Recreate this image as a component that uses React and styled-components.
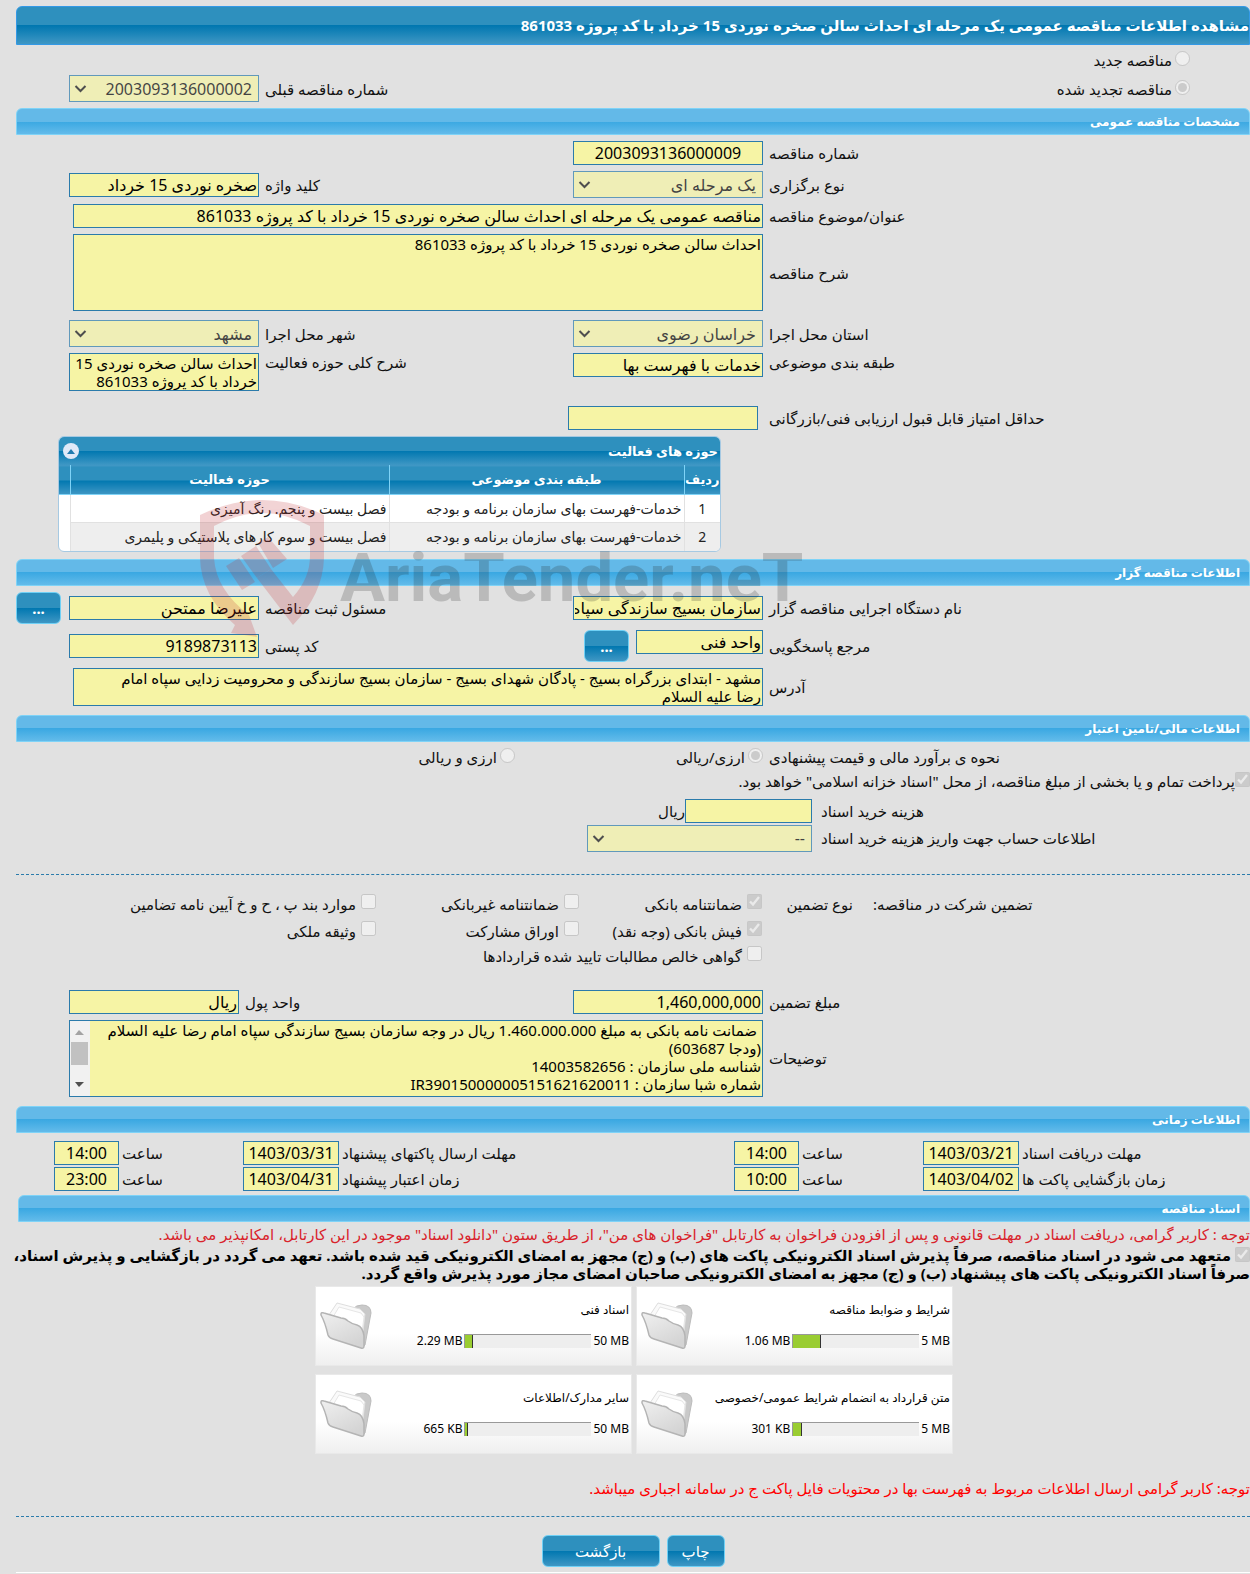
import styled, { createGlobalStyle, css } from "styled-components";

const GlobalStyle = createGlobalStyle`
	* {
		box-sizing: border-box;
	}
	body {
		margin: 0;
		background: #e1e1e1;
		color: #111;
		font-family: "Noto Sans", "DejaVu Sans", sans-serif;
		font-size: 15px;
		line-height: 18px;
	}
	input, select, textarea, button {
		font-family: inherit;
	}
`;
const darkBar = css`
	background: linear-gradient(#2e90be 0, #2e90be 50%, #0077b0 50%, #3f97c4 100%);
	color: #fff;
`;
const Page = styled.div`
	padding: 6px 0 0 16px;
	position: relative;
	overflow: hidden;
`;
const Title = styled.h1`
	${darkBar}
	border: 1px solid #3399e6;
	border-radius: 6px 6px 0 0;
	font-size: 15px;
	line-height: 37px;
	margin: 0;
	white-space: nowrap;
`;
const SectionTitle = styled.h2`
	background: linear-gradient(#63b9e8 0, #63b9e8 50%, #3aa8e2 50%, #63bbea 100%);
	border: 1px solid #7fd3f7;
	border-radius: 6px 6px 0 0;
	color: #fff;
	font-size: 12px;
	line-height: 25px;
	margin: 0;
	padding: 0 9px;
`;
const Body = styled.div`
	display: flex;
	flex-direction: column;
	gap: 6px;
	padding: 6px 0;
`;
const Row = styled.div`
	display: grid;
	grid-template-columns: 1fr 190px ${(p) => (p.$narrow ? "322px 170px" : "302px 190px")} 47px;
	column-gap: 6px;
	align-items: ${(p) => p.$align || "center"};
	margin-bottom: ${(p) => p.$after || 0}px;
`;
const Label = styled.label`
	text-align: end;
	white-space: nowrap;
`;
const field = css`
	background: #f6f4a5;
	border: 1px solid #2b7bab;
	border-radius: 0;
	color: #000;
	display: block;
	margin: 0;
	outline: none;
	width: 100%;
`;
const Input = styled.input`
	${field}
	font-size: 16px;
	height: 24px;
	padding: 1px;
	text-align: ${(p) => (p.$center ? "center" : "start")};
	width: ${(p) => p.$width || "100%"};
`;
const TextArea = styled.textarea`
	${field}
	font-size: 15px;
	height: ${(p) => p.$height}px;
	line-height: 18px;
	overflow: hidden;
	padding: ${(p) => (p.$scroll ? "0 1px 0 20px" : "0 1px")};
	resize: none;
`;
const Wide = styled.div`
	grid-column: 2 / 5;
	padding-inline-end: ${(p) => (p.$full ? 0 : 4)}px;
	position: relative;
`;
const ScrollBar = styled.svg`
	position: absolute;
	left: 1px;
	top: 1px;
`;
const Indent = styled.div`
	padding-inline-start: 5px;
`;
const SelectBox = styled.div`
	position: relative;
	width: ${(p) => p.$width || "100%"};
	opacity: 0.7;
	svg {
		position: absolute;
		left: 5px;
		top: 10px;
	}
`;
const SelectField = styled.select`
	${field}
	appearance: none;
	font-size: 16px;
	height: 27px;
	opacity: 1;
	padding: 0 6px;
`;
const Option = styled.label`
	display: flex;
	align-items: flex-start;
	gap: ${(p) => p.$gap ?? 3}px;
	height: 18px;
	white-space: nowrap;
	input {
		flex: none;
		width: 15px;
		height: 15px;
		margin: 0;
	}
`;
const LeadOption = styled(Option)`
	grid-column: 1 / 3;
	padding-right: 60px;
`;
const Options = styled.div`
	display: grid;
	grid-column: 2 / 5;
	grid-template-columns: 248px 1fr;
`;
const Button = styled.button`
	${darkBar}
	border: 1px solid #6fd0f5;
	border-radius: 6px;
	cursor: pointer;
	font-size: 15px;
	height: 32px;
	padding: 0;
	width: ${(p) => p.$width}px;
`;
const MoreButton = styled(Button)`
	font-weight: bold;
	justify-self: end;
`;
const Inline = styled.div`
	display: flex;
	align-items: flex-start;
	gap: 7px;
`;
const Purchase = styled.div`
	display: grid;
	grid-template-columns: 1fr 796px;
	align-items: center;
	gap: 2px 9px;
	margin-top: 3px;
`;
const Unit = styled.span`
	align-self: center;
`;
const Amount = styled.div`
	display: flex;
`;
const Rule = styled.hr`
	border: 0;
	border-top: 1px dashed #2b7bab;
	margin: ${(p) => p.$space};
	width: 100%;
`;
const Guarantees = styled.div`
	display: grid;
	grid-template-columns: 1fr 111px 183px 203px 360px;
	gap: 7px 0;
	margin-bottom: 20px;
	line-height: 20px;
`;
const GuaranteeTitle = styled.span`
	text-align: end;
`;
const KindTitle = styled.span`
	padding-inline-start: 20px;
	white-space: nowrap;
`;
const GuaranteeOption = styled(Option)`
	grid-column: ${(p) => p.$column};
`;
const GridPanel = styled.div`
	border: 1px solid #a6c9e2;
	border-radius: 6px;
	background: #fff;
	margin-inline-start: auto;
	margin-inline-end: 42px;
	margin-bottom: 1px;
	overflow: hidden;
	width: 663px;
`;
const GridCaption = styled.div`
	${darkBar}
	display: flex;
	align-items: center;
	justify-content: space-between;
	font-size: 13px;
	font-weight: bold;
	height: 28px;
	padding: 0 2px 0 4px;
`;
const Collapse = styled.button`
	background: #dfe9f8;
	border: 0;
	border-radius: 50%;
	display: flex;
	align-items: center;
	justify-content: center;
	height: 16px;
	padding: 0;
	width: 16px;
`;
const Table = styled.table`
	border-collapse: collapse;
	table-layout: fixed;
	width: 100%;
	th {
		${darkBar}
		border-bottom: 1px solid #7fd3f7;
		border-left: 1px solid #7fd3f7;
		border-top: 1px solid #3f97c4;
		font-size: 13px;
		height: 29px;
		padding: 0 0 3px;
	}
	td {
		border-left: 1px solid #e1e1e1;
		color: #222;
		font-size: 14px;
		height: 28px;
		padding: 0 2px;
		text-align: start;
		white-space: nowrap;
	}
	tr:nth-child(even) td:not(:last-child) {
		background: #eee;
		border-top: 1px solid #e1e1e1;
	}
	th:last-child,
	td:last-child {
		border-left: 0;
	}
	td:first-child {
		text-align: center;
	}
`;
const Col = styled.col`
	width: ${(p) => p.$width}px;
`;
const Times = styled.div`
	display: grid;
	grid-template-columns: 1fr 96px 118px 65px 389px 96px 118px 65px 35px;
	align-items: center;
	column-gap: 3px;
	row-gap: 2px;
	padding: 8px 0 4px;
`;
const TimeLabel = styled(Label)`
	grid-column: ${(p) => p.$column};
`;
const Docs = styled.section`
	margin-left: 2px;
`;
const Notice = styled.p`
	color: ${(p) => p.$color};
	margin: ${(p) => p.$space};
	white-space: nowrap;
`;
const Pledge = styled.label`
	display: block;
	font-weight: bold;
	color: #000;
	white-space: nowrap;
	input {
		width: 15px;
		height: 15px;
		margin: 0;
		vertical-align: -1px;
	}
`;
const Cards = styled.div`
	display: grid;
	grid-template-columns: 317px 317px;
	justify-content: center;
	gap: 8px 4px;
	margin-top: 4px;
`;
const Card = styled.div`
	background: linear-gradient(#fff 60%, #efefef 100%);
	border: 1px solid #e9e9e9;
	display: grid;
	grid-template-columns: 1fr 58px;
	align-items: center;
	font-size: 12px;
	height: 80px;
	padding-right: 2px;
`;
const CardText = styled.div`
	display: flex;
	flex-direction: column;
	gap: 13px;
	color: #000;
`;
const Usage = styled.div`
	display: flex;
	align-items: center;
	gap: 2px;
`;
const Size = styled.span`
	direction: ltr;
	white-space: nowrap;
`;
const Meter = styled.div`
	background: #eee;
	border-left: 1px solid #999;
	border-top: 1px solid #999;
	direction: ltr;
	height: 14px;
	width: 127px;
`;
const Fill = styled.div`
	background: #9acd32;
	border-right: 1px solid #333;
	height: 100%;
`;
const Actions = styled.div`
	display: flex;
	justify-content: center;
	gap: 7px;
	padding-bottom: 5px;
`;
const Footer = styled.footer`
	border-top: 1px solid #fff;
`;
const Watermark = styled.svg`
	position: absolute;
	left: 196px;
	top: 496px;
	pointer-events: none;
`;

function Select({ id, value, width }) {
	return (
		<SelectBox $width={width}>
			<SelectField id={id} disabled defaultValue={value}>
				<option>{value}</option>
			</SelectField>
			<svg width="13" height="8" viewBox="0 0 13 8" fill="none" stroke="#111" strokeWidth="2">
				<path d="M1.5 1l5 5 5-5" />
			</svg>
		</SelectBox>
	);
}

function Folder() {
	return (
		<svg width="54" height="50" viewBox="0 0 54 50">
			<defs>
				<linearGradient id="front" x1="0" y1="0" x2="0.6" y2="1">
					<stop offset="0" stopColor="#f0f0f0" />
					<stop offset="1" stopColor="#d4d4d4" />
				</linearGradient>
			</defs>
			<path d="M33 8q3-4 9-4 9 0 9 8l-6 32-3 3z" fill="#c9c9c9" stroke="#bcbcbc" />
			<path d="M9 14l8-12 23 6 5 5-3 26z" fill="#fafafa" stroke="#dedede" />
			<path d="M13 16l6-10 22 6 3 4-3 24z" fill="#fff" stroke="#e6e6e6" />
			<path
				d="M1 13q0-2 3-1l17 5q4 0 7 3 4 3 9 4 6 2 7 11v10q0 3-3 2l-28-9q-4-1-5-4Q5 21 1 14z"
				fill="url(#front)"
				stroke="#b4b4b4"
				strokeWidth="1.5"
			/>
		</svg>
	);
}

const ACTIVITIES = [
	["خدمات-فهرست بهای سازمان برنامه و بودجه", "فصل بیست و پنجم. رنگ آمیزی"],
	["خدمات-فهرست بهای سازمان برنامه و بودجه", "فصل بیست و سوم کارهای پلاستیکی و پلیمری"],
];
const GUARANTEES = [
	{ text: "ضمانتنامه بانکی", column: "3", checked: true },
	{ text: "ضمانتنامه غیربانکی", column: "4" },
	{ text: "موارد بند پ ، ح و خ آیین نامه تضامین", column: "5" },
	{ text: "فیش بانکی (وجه نقد)", column: "3", checked: true },
	{ text: "اوراق مشارکت", column: "4" },
	{ text: "وثیقه ملکی", column: "5" },
	{ text: "گواهی خالص مطالبات تایید شده قراردادها", column: "3 / 5" },
];
const TIMES = [
	{ id: "receive", text: "مهلت دریافت اسناد", date: "1403/03/21", time: "14:00", column: 1 },
	{ id: "send", text: "مهلت ارسال پاکتهای پیشنهاد", date: "1403/03/31", time: "14:00" },
	{ id: "open", text: "زمان بازگشایی پاکت ها", date: "1403/04/02", time: "10:00", column: 1 },
	{ id: "valid", text: "زمان اعتبار پیشنهاد", date: "1403/04/31", time: "23:00" },
];
const DOCUMENTS = [
	{ name: "شرایط و ضوابط مناقصه", used: "1.06 MB", total: "5 MB", percent: 22 },
	{ name: "اسناد فنی", used: "2.29 MB", total: "50 MB", percent: 6 },
	{ name: "متن قرارداد به انضمام شرایط عمومی/خصوصی", used: "301 KB", total: "5 MB", percent: 7 },
	{ name: "سایر مدارک/اطلاعات", used: "665 KB", total: "50 MB", percent: 2 },
];
const ADDRESS = `مشهد - ابتدای بزرگراه بسیج - پادگان شهدای بسیج - سازمان بسیج سازندگی و محرومیت زدایی سپاه امام
رضا علیه السلام`;
const NOTES = ` ضمانت نامه بانکی به مبلغ 1.460.000.000 ریال در وجه سازمان بسیج سازندگی سپاه امام رضا علیه السلام
(ودجا 603687)
شناسه ملی سازمان : 14003582656
شماره شبا سازمان : IR390150000005151621620011`;

function App() {
	return (
		<>
			<GlobalStyle />
			<Page dir="rtl" lang="fa">
				<Title>مشاهده اطلاعات مناقصه عمومی یک مرحله ای احداث سالن صخره نوردی 15 خرداد با کد پروژه 861033</Title>
				<Body>
					<Row>
						<LeadOption>
							<input type="radio" name="kind" disabled />
							مناقصه جدید
						</LeadOption>
					</Row>
					<Row>
						<LeadOption>
							<input type="radio" name="kind" disabled defaultChecked />
							مناقصه تجدید شده
						</LeadOption>
						<Label htmlFor="previous">شماره مناقصه قبلی</Label>
						<Select id="previous" value="2003093136000002" />
					</Row>
				</Body>

				<SectionTitle>مشخصات مناقصه عمومی</SectionTitle>
				<Body>
					<Row>
						<Label htmlFor="number">شماره مناقصه</Label>
						<Input id="number" readOnly $center value="2003093136000009" />
					</Row>
					<Row>
						<Label htmlFor="type">نوع برگزاری</Label>
						<Select id="type" value="یک مرحله ای" />
						<Label htmlFor="keyword">کلید واژه</Label>
						<Input id="keyword" readOnly value="صخره نوردی 15 خرداد" />
					</Row>
					<Row>
						<Label htmlFor="subject">عنوان/موضوع مناقصه</Label>
						<Wide>
							<Input
								id="subject"
								readOnly
								value="مناقصه عمومی یک مرحله ای احداث سالن صخره نوردی 15 خرداد با کد پروژه 861033"
							/>
						</Wide>
					</Row>
					<Row $after={3}>
						<Label htmlFor="description">شرح مناقصه</Label>
						<Wide>
							<TextArea
								id="description"
								readOnly
								$height={77}
								value="احداث سالن صخره نوردی 15 خرداد با کد پروژه 861033"
							/>
						</Wide>
					</Row>
					<Row>
						<Label htmlFor="province">استان محل اجرا</Label>
						<Select id="province" value="خراسان رضوی" />
						<Label htmlFor="city">شهر محل اجرا</Label>
						<Select id="city" value="مشهد" />
					</Row>
					<Row $align="start" $after={9}>
						<Label htmlFor="category">طبقه بندی موضوعی</Label>
						<Input id="category" readOnly value="خدمات با فهرست بها" />
						<Label htmlFor="activity">شرح کلی حوزه فعالیت</Label>
						<TextArea
							id="activity"
							readOnly
							$height={38}
							value="احداث سالن صخره نوردی 15 خرداد با کد پروژه 861033"
						/>
					</Row>
					<Row>
						<Label htmlFor="score">حداقل امتیاز قابل قبول ارزیابی فنی/بازرگانی</Label>
						<Indent>
							<Input id="score" readOnly $width="190px" value="" />
						</Indent>
					</Row>
					<GridPanel>
						<GridCaption>
							حوزه های فعالیت
							<Collapse type="button" aria-label="بستن">
								<svg width="8" height="5" viewBox="0 0 8 5">
									<path d="M0 5l4-5 4 5z" fill="#217bb0" />
								</svg>
							</Collapse>
						</GridCaption>
						<Table>
							<colgroup>
								<Col $width={36} />
								<Col $width={295} />
								<Col $width={319} />
								<Col $width={12} />
							</colgroup>
							<thead>
								<tr>
									<th>ردیف</th>
									<th>طبقه بندی موضوعی</th>
									<th>حوزه فعالیت</th>
									<th />
								</tr>
							</thead>
							<tbody>
								{ACTIVITIES.map(([topic, area], i) => (
									<tr key={area}>
										<td>{i + 1}</td>
										<td>{topic}</td>
										<td>{area}</td>
										<td />
									</tr>
								))}
							</tbody>
						</Table>
					</GridPanel>
				</Body>

				<SectionTitle>اطلاعات مناقصه گزار</SectionTitle>
				<Body>
					<Row>
						<Label htmlFor="agency">نام دستگاه اجرایی مناقصه گزار</Label>
						<Input id="agency" readOnly value="سازمان بسیج سازندگی سپاه امام رضا علیه السلام" />
						<Label htmlFor="officer">مسئول ثبت مناقصه</Label>
						<Input id="officer" readOnly value="علیرضا ممتحن" />
						<MoreButton type="button" $width={45}>
							...
						</MoreButton>
					</Row>
					<Row>
						<Label htmlFor="contact">مرجع پاسخگویی</Label>
						<Inline>
							<Input id="contact" readOnly $width="127px" value="واحد فنی" />
							<MoreButton type="button" $width={45}>
								...
							</MoreButton>
						</Inline>
						<Label htmlFor="postcode">کد پستی</Label>
						<Input id="postcode" readOnly value="9189873113" />
					</Row>
					<Row $after={3}>
						<Label htmlFor="address">آدرس</Label>
						<Wide>
							<TextArea id="address" readOnly $height={38} value={ADDRESS} />
						</Wide>
					</Row>
				</Body>

				<SectionTitle>اطلاعات مالی/تامین اعتبار</SectionTitle>
				<Body>
					<Row>
						<Label as="span">نحوه ی برآورد مالی و قیمت پیشنهادی</Label>
						<Options>
							<Option>
								<input type="radio" name="currency" disabled defaultChecked />
								ارزی/ریالی
							</Option>
							<Option>
								<input type="radio" name="currency" disabled />
								ارزی و ریالی
							</Option>
						</Options>
					</Row>
					<Option $gap={0}>
						<input type="checkbox" disabled defaultChecked />
						پرداخت تمام و یا بخشی از مبلغ مناقصه، از محل "اسناد خزانه اسلامی" خواهد بود.
					</Option>
					<Purchase>
						<Label htmlFor="cost">هزینه خرید اسناد</Label>
						<Amount>
							<Input id="cost" readOnly $width="127px" value="" />
							<Unit>ریال</Unit>
						</Amount>
						<Label htmlFor="account">اطلاعات حساب جهت واریز هزینه خرید اسناد</Label>
						<Select id="account" value="--" width="225px" />
					</Purchase>
					<Rule $space="16px 0 13px" />
					<Guarantees>
						<GuaranteeTitle>تضمین شرکت در مناقصه:</GuaranteeTitle>
						<KindTitle>نوع تضمین</KindTitle>
						{GUARANTEES.map((g) => (
							<GuaranteeOption key={g.text} $column={g.column} $gap={5}>
								<input type="checkbox" disabled defaultChecked={g.checked} />
								{g.text}
							</GuaranteeOption>
						))}
					</Guarantees>
					<Row $narrow>
						<Label htmlFor="amount">مبلغ تضمین</Label>
						<Input id="amount" readOnly value="1,460,000,000" />
						<Label htmlFor="unit">واحد پول</Label>
						<Input id="unit" readOnly value="ریال" />
					</Row>
					<Row $after={3}>
						<Label htmlFor="notes">توضیحات</Label>
						<Wide $full>
							<TextArea id="notes" readOnly $scroll $height={77} value={NOTES} />
							<ScrollBar width="20" height="75" viewBox="0 0 20 75" aria-hidden="true">
								<path d="M0 0h20v75H0z" fill="#f1f1f1" />
								<path d="M5 14l4-5 5 5z" fill="#a3a3a3" />
								<path d="M1 21h17v23H1z" fill="#c1c1c1" />
								<path d="M5 61l4 5 5-5z" fill="#505050" />
							</ScrollBar>
						</Wide>
					</Row>
				</Body>

				<SectionTitle>اطلاعات زمانی</SectionTitle>
				<Times>
					{TIMES.map((t) => [
						<TimeLabel key={t.id} htmlFor={t.id} $column={t.column}>
							{t.text}
						</TimeLabel>,
						<Input key={`${t.id}-date`} id={t.id} readOnly $center value={t.date} />,
						<Label key={`${t.id}-label`} htmlFor={`${t.id}-time`}>
							ساعت
						</Label>,
						<Input key={`${t.id}-time`} id={`${t.id}-time`} readOnly $center value={t.time} />,
					])}
				</Times>

				<Docs>
					<SectionTitle>اسناد مناقصه</SectionTitle>
					<Notice $color="#d9232b" $space="3px 0">
						توجه : کاربر گرامی، دریافت اسناد در مهلت قانونی و پس از افزودن فراخوان به کارتابل "فراخوان های من"، از
						طریق ستون "دانلود اسناد" موجود در این کارتابل، امکانپذیر می باشد.
					</Notice>
					<Pledge>
						<input type="checkbox" disabled defaultChecked /> متعهد می شود در اسناد مناقصه، صرفاً پذیرش اسناد
						الکترونیکی پاکت های (ب) و (ج) مجهز به امضای الکترونیکی قید شده باشد. تعهد می گردد در بازگشایی و پذیرش
						اسناد،
						<br />
						صرفاً اسناد الکترونیکی پاکت های پیشنهاد (ب) و (ج) مجهز به امضای الکترونیکی صاحبان امضای مجاز مورد
						پذیرش واقع گردد.
					</Pledge>
					<Cards>
						{DOCUMENTS.map((d) => (
							<Card key={d.name}>
								<CardText>
									<span>{d.name}</span>
									<Usage>
										<Size>{d.total}</Size>
										<Meter>
											<Fill style={{ width: `${d.percent}%` }} />
										</Meter>
										<Size>{d.used}</Size>
									</Usage>
								</CardText>
								<Folder />
							</Card>
						))}
					</Cards>
					<Notice $color="#f00" $space="25px 0 19px">
						توجه: کاربر گرامی ارسال اطلاعات مربوط به فهرست بها در محتویات فایل پاکت ج در سامانه اجباری میباشد.
					</Notice>
				</Docs>
				<Rule $space="0 0 18px" />
				<Actions>
					<Button type="button" $width={58}>
						چاپ
					</Button>
					<Button type="button" $width={118}>
						بازگشت
					</Button>
				</Actions>
				<Footer />

				<Watermark width="630" height="145" viewBox="0 0 630 145" aria-hidden="true">
					<g fill="#c0262c" opacity="0.2">
						<path d="M4 19Q66-11 128 19V62Q127 98 97 129L61 82 75 73 97 101Q114 82 114 60V30Q66 4 18 30V62Q20 94 53 119L61 141 35 137 39 129Q5 100 4 62z" />
						<path d="M30 70L43 62 59 86 46 94zM45 60L60 50 75 73 61 82zM62 47L72 41 91 63 77 72z" />
					</g>
					<text
						x="144"
						y="105"
						direction="ltr"
						fill="#222"
						opacity="0.2"
						fontFamily="Roboto, sans-serif"
						fontWeight="bold"
						fontSize="67"
					>
						AriaTender.neT
					</text>
				</Watermark>
			</Page>
		</>
	);
}

export default App;
